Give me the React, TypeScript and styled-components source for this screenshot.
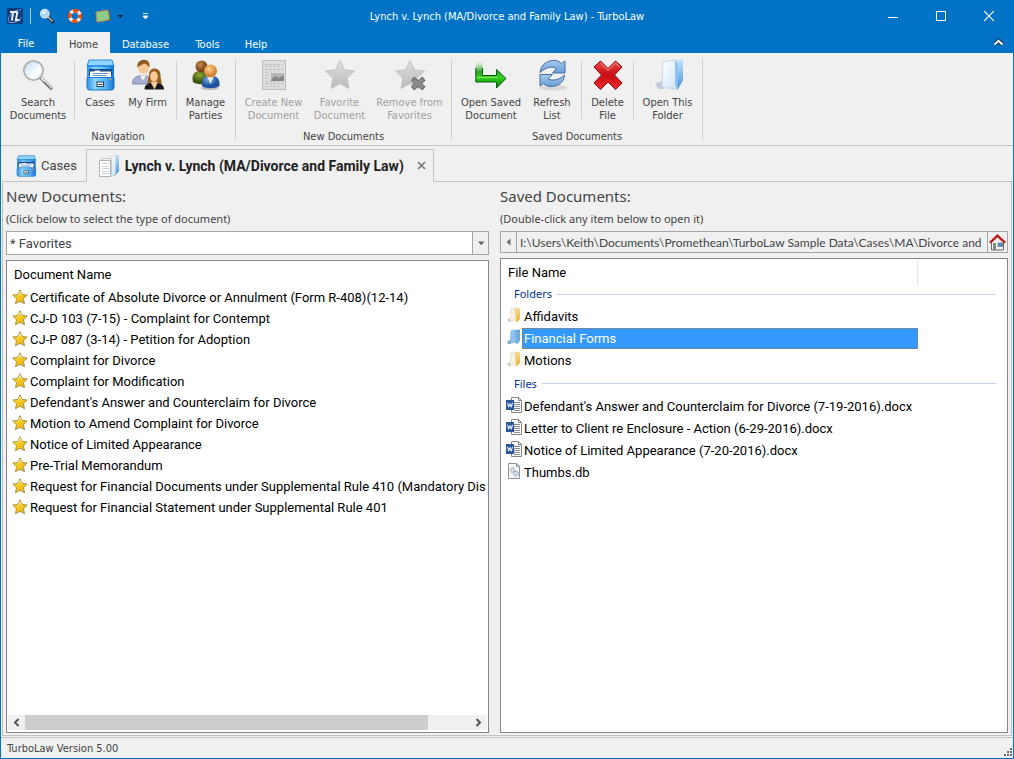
import React from "react";
import styled, { createGlobalStyle, css } from "styled-components";

const blue = "#0173c7";
const face = "#f0f0f0";
const line = "#c3c3c3";
const chromeFont = `"DejaVu Sans Condensed", "Noto Sans", sans-serif`;
const headingFont = `"Noto Sans", "Open Sans", sans-serif`;
const bodyFont = `Roboto, "Open Sans", sans-serif`;
const pathFont = `Lato, "Open Sans", sans-serif`;

const GlobalStyle = createGlobalStyle`
  *, *::before, *::after { box-sizing: border-box; }
  body { margin: 0; background: ${face}; font-family: ${bodyFont}; }
  button, input, select { font-family: inherit; }
`;

const bare = css`
  border: 0;
  margin: 0;
  padding: 0;
  background: transparent;
  color: inherit;
`;

const Window = styled.div`
  display: flex;
  flex-direction: column;
  min-height: 100vh;
  border: 1px solid ${blue};
  border-top: 0;
  background: ${face};
  color: #444;
`;

/* Title bar */
const TitleBar = styled.header`
  display: grid;
  grid-template-columns: 1fr auto 1fr;
  align-items: center;
  height: 32px;
  background: ${blue};
  color: #fff;
  font-family: ${chromeFont};
`;
const QuickAccess = styled.div`
  display: flex;
  align-items: center;
  padding-left: 6px;
`;
const QuickButton = styled.button<{ $w: number }>`
  ${bare}
  display: flex;
  align-items: center;
  justify-content: center;
  width: ${(p) => p.$w}px;
  height: 24px;
`;
const QuickDivider = styled.span`
  width: 1px;
  height: 16px;
  margin: 0 2px 0 7px;
  background: #b9cfe0;
`;
const Title = styled.h1`
  margin: 0;
  padding-top: 2px;
  font-size: 11px;
  font-weight: 400;
  line-height: 16px;
`;
const WindowButtons = styled.div`
  display: flex;
  justify-content: flex-end;
`;
const WindowButton = styled.button`
  ${bare}
  display: flex;
  align-items: center;
  justify-content: center;
  width: 48px;
  height: 32px;
`;

/* Ribbon tabs */
const MenuBar = styled.nav`
  display: flex;
  height: 21px;
  background: ${blue};
  font-family: ${chromeFont};
`;
const MenuTab = styled.button<{ $w: number; $active?: boolean }>`
  ${bare}
  width: ${(p) => p.$w}px;
  padding-top: 4px;
  font-size: 11px;
  line-height: 17px;
  color: ${(p) => (p.$active ? "#444" : "#fff")};
  background: ${(p) => (p.$active ? face : "transparent")};
`;
const FileTab = styled(MenuTab)`
  padding: 2px 6px 0 0;
`;
const CollapseButton = styled.button`
  ${bare}
  display: flex;
  align-items: center;
  justify-content: center;
  width: 30px;
  margin-left: auto;
`;

/* Ribbon */
const Ribbon = styled.div`
  display: flex;
  padding: 6px 0 5px;
  border-bottom: 1px solid ${line};
  font-family: ${chromeFont};
`;
const RibbonGroup = styled.section`
  display: flex;
  flex-direction: column;
  height: 81px;
  padding: 0 4px;
  border-right: 1px solid #cfcfcf;
`;
const RibbonItems = styled.div`
  display: flex;
  flex: 1;
`;
const RibbonLabel = styled.h2`
  margin: 0;
  font-size: 11px;
  font-weight: 400;
  line-height: 7px;
  text-align: center;
`;
const RibbonButton = styled.button<{ $w: number }>`
  ${bare}
  display: flex;
  flex-direction: column;
  align-items: center;
  width: ${(p) => p.$w}px;
  height: 64px;
  font-size: 11px;
  line-height: 13px;
  white-space: pre;
  &:disabled {
    color: #a0a0a0;
  }
  svg {
    flex: none;
    margin-bottom: 5px;
  }
`;
const RibbonDivider = styled.span`
  width: 1px;
  height: 58px;
  margin: 2px 3px;
  background: #cfcfcf;
`;

/* Document tabs */
const TabStrip = styled.nav`
  display: flex;
  height: 36px;
  padding-top: 3px;
  margin: 0 1px;
`;
const DocTab = styled.div<{ $active?: boolean }>`
  display: flex;
  align-items: center;
  padding: ${(p) => (p.$active ? "0 4px 0 11px" : "0 9px 0 12px")};
  border: 1px solid ${(p) => (p.$active ? line : "transparent")};
  border-bottom-color: ${(p) => (p.$active ? "transparent" : line)};
  ${(p) => !p.$active && "border-right: 0;"}
`;
const DocTabLabel = styled.button<{ $active?: boolean }>`
  ${bare}
  display: flex;
  align-items: center;
  gap: 4px;
  font-size: ${(p) => (p.$active ? 14 : 13)}px;
  line-height: 18px;
  ${(p) => p.$active && "font-weight: 700; color: #222;"}
`;
const CloseButton = styled.button`
  ${bare}
  display: flex;
  padding: 3px;
  margin-left: 10px;
`;
const TabRest = styled.div`
  flex: 1;
  border-bottom: 1px solid ${line};
`;

/* Work area */
const Workspace = styled.main`
  display: grid;
  grid-template-columns: minmax(0, 483fr) minmax(0, 508fr);
  gap: 11px;
  flex: 1;
  margin: 0 1px;
  padding: 4px 3px 2px;
  border: 1px solid ${line};
  border-top: 0;
`;
const Pane = styled.section`
  display: flex;
  flex-direction: column;
`;
const PaneTitle = styled.h2`
  margin: 0;
  font-family: ${headingFont};
  font-size: 15px;
  font-weight: 400;
  line-height: 20px;
`;
const PaneHint = styled.p`
  margin: 5px 0;
  font-family: ${headingFont};
  font-size: 11px;
  line-height: 15px;
`;
const Combo = styled.div`
  display: grid;
  grid-template-columns: minmax(0, 1fr) 16px;
  height: 24px;
  border: 1px solid #a6a6a6;
  background: #fff;
`;
const ComboSelect = styled.select`
  ${bare}
  grid-area: 1 / 1 / 2 / 3;
  appearance: none;
  padding-left: 3px;
  font-size: 13px;
  outline: none;
`;
const ComboArrow = styled.span`
  grid-area: 1 / 2 / 2 / 3;
  display: flex;
  align-items: center;
  justify-content: center;
  border-left: 1px solid #a6a6a6;
  background: ${face};
  pointer-events: none;
`;
const PathBar = styled.div`
  display: flex;
  height: 22px;
  border: 1px solid #a6a6a6;
`;
const PathButton = styled.button<{ $w: number }>`
  ${bare}
  display: flex;
  align-items: center;
  justify-content: center;
  flex: none;
  width: ${(p) => p.$w}px;
`;
const PathInput = styled.input`
  ${bare}
  flex: 1;
  min-width: 0;
  padding: 0 1px 0 3px;
  border: solid #a6a6a6;
  border-width: 0 1px;
  font-family: ${pathFont};
  font-size: 12px;
  color: #444;
  outline: none;
`;
const ListBox = styled.div`
  display: flex;
  flex-direction: column;
  flex: 1;
  margin-top: 5px;
  border: 1px solid #828790;
  background: #fff;
  color: #000;
  overflow: hidden;
`;
const ListTable = styled.table<{ $row: number }>`
  width: 100%;
  table-layout: fixed;
  border-collapse: collapse;
  font-size: 13px;
  line-height: 18px;
  th {
    font-weight: 400;
    text-align: left;
  }
  td {
    height: ${(p) => p.$row}px;
    padding: 0;
    white-space: nowrap;
    overflow: hidden;
  }
`;
const HeadCell = styled.th<{ $edge?: boolean }>`
  height: ${(p) => (p.$edge ? 26 : 25)}px;
  padding: ${(p) => (p.$edge ? "1px 7px 0" : "2px 7px 0")};
`;
const HeadText = styled.div<{ $edge?: boolean }>`
  line-height: 24px;
  ${(p) => p.$edge && "margin-right: -7px; border-right: 1px solid #e5e5e5;"}
`;
const NarrowCol = styled.col`
  width: 89px;
`;
const GroupCell = styled.th<{ $h: number }>`
  height: ${(p) => p.$h}px;
  padding: 1px 11px 0 13px;
  vertical-align: ${(p) => (p.$h > 20 ? "middle" : "top")};
`;
const GroupHeading = styled.div`
  display: flex;
  align-items: center;
  gap: 5px;
  font-family: ${headingFont};
  font-size: 11px;
  line-height: 16px;
  color: #003399;
  &::after {
    content: "";
    flex: 1;
    height: 1px;
    background: #c9d3ea;
  }
`;
const Entry = styled.div`
  display: flex;
  align-items: center;
  height: 21px;
  padding-left: 5px;
  svg {
    flex: none;
    margin-bottom: 2px;
  }
`;
const EntryName = styled.span<{ $selected?: boolean }>`
  flex: 1;
  height: 21px;
  padding-left: 1px;
  border: 1px solid transparent;
  line-height: 19px;
  ${(p) => p.$selected && "background: #3399ff; color: #fff; border: 1px dotted #a8794d;"}
`;
const ScrollBar = styled.div`
  display: flex;
  height: 15px;
  margin: auto 1px 2px;
  background: #f0f0f0;
`;
const ScrollButton = styled.button`
  ${bare}
  display: flex;
  align-items: center;
  justify-content: center;
  width: 17px;
`;
const ScrollTrack = styled.div`
  flex: 1;
  padding-right: 42px;
`;
const ScrollThumb = styled.div`
  height: 100%;
  background: #cdcdcd;
`;
const StatusBar = styled.footer`
  display: flex;
  align-items: center;
  justify-content: space-between;
  height: 21px;
  margin-top: 1px;
  padding: 2px 0 0 6px;
  border-top: 1px solid ${line};
  font-family: ${chromeFont};
  font-size: 11px;
  line-height: 16px;
  svg {
    align-self: flex-end;
    margin: 0 1px 2px 0;
  }
`;

/* Icons */
const HiddenSvg = styled.svg`
  position: absolute;
`;
const Gradients = () => (
  <HiddenSvg width="0" height="0" aria-hidden="true">
    <defs>
      <linearGradient id="cab" x1="0" x2="1">
        <stop offset="0" stopColor="#2f92e6" />
        <stop offset=".3" stopColor="#8fd6fb" />
        <stop offset=".7" stopColor="#52b4f3" />
        <stop offset="1" stopColor="#1670cf" />
      </linearGradient>
      <linearGradient id="gold" x1="0" x2="1" y1="0" y2="1">
        <stop offset="0" stopColor="#ffe238" />
        <stop offset="1" stopColor="#eaa900" />
      </linearGradient>
      <linearGradient id="gray" x1="0" x2="0" y1="0" y2="1">
        <stop offset="0" stopColor="#e0e0e0" />
        <stop offset="1" stopColor="#bababa" />
      </linearGradient>
      <linearGradient id="green" x1="0" x2="0" y1="0" y2="1">
        <stop offset="0" stopColor="#8fe06a" stopOpacity="0" />
        <stop offset=".4" stopColor="#2f9c2c" />
        <stop offset=".6" stopColor="#35d61c" />
        <stop offset="1" stopColor="#067a06" />
      </linearGradient>
      <linearGradient id="red" x1="0" x2="0" y1="0" y2="1">
        <stop offset="0" stopColor="#f04a4a" />
        <stop offset=".5" stopColor="#c80d12" />
        <stop offset="1" stopColor="#ee2a2f" />
      </linearGradient>
      <linearGradient id="glass" x1="0" x2="1" y1="0" y2="1">
        <stop offset="0" stopColor="#b9daf7" />
        <stop offset=".6" stopColor="#f8fcff" />
        <stop offset="1" stopColor="#dbeefd" />
      </linearGradient>
      <linearGradient id="paper" x1="0" x2="1" y1="0" y2="1">
        <stop offset="0" stopColor="#ffffff" />
        <stop offset="1" stopColor="#cfe3f5" />
      </linearGradient>
      <linearGradient id="bluefold" x1="0" x2="0" y1="0" y2="1">
        <stop offset="0" stopColor="#c6e4fa" />
        <stop offset="1" stopColor="#3f8fdd" />
      </linearGradient>
      <linearGradient id="goldfold" x1="0" x2="0" y1="0" y2="1">
        <stop offset="0" stopColor="#fbe3a0" />
        <stop offset="1" stopColor="#eda514" />
      </linearGradient>
      <linearGradient id="sync" x1="0" x2="0" y1="0" y2="1">
        <stop offset="0" stopColor="#a8cbee" />
        <stop offset="1" stopColor="#6a9dd6" />
      </linearGradient>
      <radialGradient id="skin" cx=".4" cy=".35">
        <stop offset="0" stopColor="#ffd596" />
        <stop offset="1" stopColor="#d3862e" />
      </radialGradient>
      <radialGradient id="tan" cx=".4" cy=".35">
        <stop offset="0" stopColor="#c98a4c" />
        <stop offset="1" stopColor="#7a4516" />
      </radialGradient>
      <radialGradient id="olive" cx=".4" cy=".3">
        <stop offset="0" stopColor="#8ea63c" />
        <stop offset="1" stopColor="#3f5510" />
      </radialGradient>
      <radialGradient id="navy" cx=".4" cy=".3">
        <stop offset="0" stopColor="#7fb2ea" />
        <stop offset="1" stopColor="#1f519f" />
      </radialGradient>
    </defs>
  </HiddenSvg>
);

const Logo = () => (
  <svg width="16" height="16" viewBox="0 0 16 16">
    <rect width="16" height="16" rx="1" fill="#123c80" />
    <path d="M1.500 13.500C0 8 7 1.500 14 1.800" stroke="#6f98d4" strokeWidth="1" fill="none" />
    <path d="M3 4h7M6.200 4 4.800 12.500M10.500 3.500 8.800 12H13" stroke="#eaf2fc" strokeWidth="1.900" fill="none" />
    <path d="M2 14.300c5 1 10-1 12.500-5" stroke="#8db0e2" strokeWidth="1" fill="none" />
  </svg>
);
const QuickSearchIcon = () => (
  <svg width="16" height="16" viewBox="0 0 16 16">
    <path d="m9 9 5 5" stroke="#222" strokeWidth="2.600" strokeLinecap="round" />
    <path d="m9 9 4.600 4.400" stroke="#d8d8d8" strokeWidth="1.200" />
    <circle cx="5.800" cy="5.700" r="4.200" fill="#a9d6f6" stroke="#d5e6f2" strokeWidth="1.300" />
    <circle cx="4.800" cy="4.600" r="1.700" fill="#e9f7ff" />
  </svg>
);
const LifebuoyIcon = () => (
  <svg width="16" height="16" viewBox="0 0 16 16">
    <circle cx="8" cy="8" r="5.200" fill="none" stroke="#f7f3ef" strokeWidth="3.800" />
    <circle cx="8" cy="8" r="5.200" fill="none" stroke="#e2501e" strokeWidth="3.800" strokeDasharray="5.200 2.968" strokeDashoffset="2.600" />
    <circle cx="8" cy="8" r="7.200" fill="none" stroke="#8e3a1c" strokeWidth=".5" />
  </svg>
);
const NoteIcon = () => (
  <svg width="16" height="14" viewBox="0 0 16 14">
    <path d="M1 3 13.500 1 15 11 2 13Z" fill="#8ecb86" stroke="#b08a52" strokeWidth="1" />
    <path d="m13.500 1 1.500 10-3 .5" fill="none" stroke="#7d5e38" strokeWidth="1" />
  </svg>
);
const CaretDown = () => (
  <svg width="8" height="5" viewBox="0 0 8 5">
    <path d="M1 .5h6.500L4.250 4.200Z" fill="#666" />
  </svg>
);
const TinyCaret = () => (
  <svg width="5" height="3" viewBox="0 0 5 3">
    <path d="M0 0h5L2.500 3Z" fill="#0a1a2c" />
  </svg>
);
const CustomizeIcon = () => (
  <svg width="7" height="7" viewBox="0 0 7 7">
    <path d="M1 .500h5M1 3h5L3.500 6Z" fill="#fff" stroke="#fff" strokeWidth=".8" />
  </svg>
);
const SearchIcon = () => (
  <svg width="32" height="32" viewBox="0 0 32 32">
    <path d="m18 18 11 11" stroke="#777" strokeWidth="3.600" strokeLinecap="round" />
    <path d="m18.500 18 10.500 10.500" stroke="#ededed" strokeWidth="2" strokeLinecap="round" />
    <path d="m22 22.800 6.500 6.200" stroke="#444" strokeWidth="1" />
    <circle cx="11.500" cy="11.500" r="9.500" fill="url(#glass)" stroke="#8b8b8b" strokeWidth="1.600" />
    <circle cx="11.500" cy="11.500" r="9.300" fill="none" stroke="#d9d9d9" strokeWidth=".7" />
  </svg>
);
const CabinetIcon = ({ size = 32 }: { size?: number }) => (
  <svg width={size} height={size} viewBox="0 0 32 32">
    <path d="M5 1h23l2 6H3Z" fill="#8fd4fa" stroke="#2f8bdb" />
    <path d="M3 6h27v13H3Z" fill="url(#cab)" />
    <path d="M3 7h27" stroke="#1f86e0" strokeWidth="1.500" />
    <rect x="5" y="10" width="23" height="7" fill="#174a86" />
    <path d="M6 12.500h4l1-1h5v1h11v6H6Z" fill="#fff" />
    <path d="M9 14.500h15M9 16.500h13" stroke="#5b95cc" />
    <path d="M3 18.500h27V29l-1.500 2h-24L3 29Z" fill="url(#cab)" stroke="#1b76cf" />
    <rect x="13" y="23" width="6.500" height="4.500" fill="#fff" stroke="#23405f" />
    <path d="M14.500 25.500h4" stroke="#333" />
    <path d="M25.500 20.500h2" stroke="#ff9a2e" strokeWidth="1.500" />
  </svg>
);
const FirmIcon = () => (
  <svg width="32" height="32" viewBox="0 0 32 32">
    <path d="M.5 25c-.5-5 3-8.500 10.500-8.500 5 0 8 2 8.500 8.500Z" fill="#a9afd0" stroke="#757ca5" strokeWidth=".8" />
    <path d="m8 16.500 3 5 3-5Z" fill="#fff" />
    <circle cx="11.500" cy="9" r="5.500" fill="#f5c795" />
    <path d="M5.500 9c-1-5 2-8 6-8.300C16 .5 18.500 4 17.300 9c-1-2.500-3-4-5-4.500C10 6 7 6 5.500 9Z" fill="#8e5a20" />
    <path d="M17 27c-3-4 0-8 0-11 0-5 3-6.500 5.500-6.500 4 0 6 3 6 7 0 4 2 6 .5 10Z" fill="#9a5e1c" />
    <ellipse cx="22" cy="17.500" rx="3.800" ry="5.200" fill="#f7cb98" />
    <path d="M12.500 30.500c0-5 4-7 9.500-7s10 2 10 7Z" fill="#16181d" />
    <path d="m18.500 23 4 7.500 3.500-7.500Z" fill="#f7cb98" />
  </svg>
);
const PartiesIcon = () => (
  <svg width="32" height="32" viewBox="0 0 32 32">
    <ellipse cx="20" cy="29" rx="9" ry="2" fill="#bcbcbc" />
    <path d="M3 23c-2-8 2-11 8-11s9 3 9 11c-5 3-13 3-17 0Z" fill="url(#olive)" />
    <circle cx="11.500" cy="7.500" r="6" fill="url(#tan)" />
    <path d="M12 27c-1-7 2-10.500 8.500-10.500S30 20 29.500 27c-5 3-13 3-17.500 0Z" fill="url(#navy)" />
    <path d="m17 17 3.500 8 3.500-8Z" fill="#e8f1fb" />
    <circle cx="20.500" cy="12" r="6.500" fill="url(#skin)" />
  </svg>
);
const NewDocIcon = () => (
  <svg width="32" height="32" viewBox="0 0 32 32">
    <rect x="4.500" y="1.500" width="23" height="29" fill="#dedede" stroke="#bdbdbd" />
    <path d="M7 5.500h18M7 7.500h15M7 10.500h18M7 13.500h4M7 16.500h4M7 19.500h4M7 22.500h17M7 24.500h18M7 27.500h14" stroke="#c2c2c2" strokeDasharray="3 1" />
    <rect x="13" y="14" width="13" height="8" fill="#b5b5b5" />
    <path d="m13 21 4-4 4 2 5-3v6H13Z" fill="#858585" />
  </svg>
);
const starPath =
  "M16 1.500 20.300 10.800 30.500 12 23 19.200 25 29.500 16 24.500 7 29.500 9 19.200 1.500 12 11.700 10.800Z";
const GrayStar = ({ crossed }: { crossed?: boolean }) => (
  <svg width="32" height="32" viewBox="0 0 32 32">
    <path d={starPath} fill="url(#gray)" stroke="#c2c2c2" strokeLinejoin="round" />
    {crossed && (
      <g>
        <path d="m18.500 19.500 11.500 10M30 19.500l-11.500 10" stroke="#6f6f6f" strokeWidth="5" />
        <path d="m19.500 20.500 9.500 8M29 20.500l-9.500 8" stroke="#8d8d8d" strokeWidth="3" />
      </g>
    )}
  </svg>
);
const OpenArrowIcon = () => (
  <svg width="32" height="32" viewBox="0 0 32 32">
    <path d="M.8 2h6.700v14.500h14V10.500L31 19.500l-9.500 9.500v-6H.8Z" fill="url(#green)" />
    <path d="M.8 9v14h20.700v6L31 19.500l-9.500-9v6h-14V9" fill="none" stroke="#0b5a12" />
    <path d="M2.500 18.500h20" stroke="#8be564" strokeWidth="1" />
  </svg>
);
const RefreshIcon = () => (
  <svg width="32" height="32" viewBox="0 0 32 32">
    <ellipse cx="17" cy="28.500" rx="14" ry="3" fill="#d8d8d8" />
    <g fill="url(#sync)" stroke="#456fa6" strokeLinejoin="round">
      <path d="M4 13.500C5 5 12 1 19 1.500c3 .3 5 1.500 6.500 3L29 2v12H16.500l4-4.500C15 6.500 9 9 4 13.500Z" />
      <path d="M28.500 16C28 24 21 28 14 27.500c-3-.3-5-1.500-6.500-3L4 27V15.500h12.500L12 20c5 2.500 11.500.5 16.500-4Z" />
    </g>
  </svg>
);
const DeleteIcon = () => (
  <svg width="32" height="32" viewBox="0 0 32 32">
    <path
      d="M8.500 2 16 9.500 23.500 2 30 8l-7.500 8 7.500 8-6.500 6.500L16 23l-7.500 7.500L2 24l7.500-8L2 8Z"
      fill="url(#red)"
      stroke="#8d0508"
      strokeLinejoin="round"
    />
    <path d="M8.500 4 16 11.500 23.500 4 28 8.500" fill="none" stroke="#ff9b9b" />
  </svg>
);
const OpenFolderIcon = () => (
  <svg width="32" height="32" viewBox="0 0 32 32">
    <path d="m3 24 9-2v8H6Z" fill="#c3ccdc" />
    <path d="M17 1 31 .5v21l-6 10V8Z" fill="url(#bluefold)" />
    <path d="m11 3 12-2 2 29-15-1.500Z" fill="url(#paper)" stroke="#b4cde4" strokeWidth=".7" />
    <path d="m23 2 3 3-.5 24.500L23 27Z" fill="#8fc3f0" />
  </svg>
);
const CaseTabIcon = () => (
  <svg width="23" height="24" viewBox="0 0 23 24">
    <path d="m12 3 9-2.500v17L16 22Z" fill="url(#bluefold)" />
    <path d="M10 3 18 1l-.5 19-5 2.500Z" fill="url(#paper)" stroke="#bfd0e0" strokeWidth=".6" />
    <rect x="3.500" y="4.500" width="10" height="15" fill="#f5f5f5" stroke="#c8c8c8" />
    <rect x="1.500" y="6.500" width="11" height="16" fill="#fff" stroke="#b4b4b4" />
    <path d="M4 9.500h7M4 12.500h7M4 14.500h7M4 17.500h7M4 19.500h7" stroke="#cdd2d9" />
  </svg>
);
const CloseIcon = () => (
  <svg width="9" height="9" viewBox="0 0 9 9">
    <path d="m1 1 7 7M8 1 1 8" stroke="#777" strokeWidth="1.600" />
  </svg>
);
const GoldStar = () => (
  <svg width="16" height="16" viewBox="0 0 32 32">
    <path d={starPath} fill="url(#gold)" stroke="#a08c4c" strokeWidth="1.800" strokeLinejoin="round" />
    <path d="M12 14 16 5l4 8" fill="none" stroke="#fff3a0" strokeWidth="1.500" />
  </svg>
);
const FolderIcon = ({ selected }: { selected?: boolean }) => (
  <svg width="16" height="16" viewBox="0 0 16 16">
    <path d="m1 12.500 4-2v4.500H2.500Z" fill={selected ? "#8aa5c0" : "#cfccc2"} />
    <path d="M7 1 14 .5v11L11 15.500Z" fill={selected ? "#6aa9dc" : "url(#goldfold)"} />
    <path d="M5 1.500 9.500 1l.5 12.500-6 .5Z" fill={selected ? "#8fc2ec" : "#f6f1e2"} stroke={selected ? "#7fb2dc" : "#ddd6c2"} strokeWidth=".6" />
    <path d="M9.500 1 11.500 3l-.5 12.500-1.500-2Z" fill={selected ? "#79b0e0" : "#f3cf6c"} />
  </svg>
);
const WordIcon = () => (
  <svg width="16" height="16" viewBox="0 0 16 16">
    <path d="M5.500.5h7l3 3v12h-10Z" fill="#fff" stroke="#858585" />
    <path d="M12.500.5v3h3" fill="none" stroke="#858585" />
    <path d="M8 5.500h6M8 7.500h6M8 9.500h6M8 11.500h6M8 13.500h6" stroke="#8c8c8c" />
    <rect y="3" width="8" height="10" fill="#2b579a" />
    <path d="m1.500 5.800 1.200 4.400L4 6.500l1.300 3.700 1.200-4.400" stroke="#fff" fill="none" />
  </svg>
);
const DbIcon = () => (
  <svg width="16" height="16" viewBox="0 0 16 16">
    <path d="M2.500.5h8l3 3v12h-11Z" fill="#f8f8f8" stroke="#929292" />
    <path d="M10.500.5v3h3" fill="none" stroke="#929292" />
    <circle cx="6.500" cy="7" r="2.200" fill="#dde3e8" stroke="#89939c" strokeDasharray="1.200 .5" />
    <circle cx="9.800" cy="10.500" r="2.500" fill="#cfe0ee" stroke="#7d8f9f" strokeDasharray="1.200 .5" />
  </svg>
);
const HomeIcon = () => (
  <svg width="17" height="17" viewBox="0 0 17 17">
    <path d="M2.500 8.500 8.500 3l6 5.500v7.500h-12Z" fill="#f2f2ee" stroke="#666" />
    <path d="M.8 8.800 8.500 1.500l7.700 7.300" fill="none" stroke="#c5161c" strokeWidth="2.200" />
    <rect x="4" y="9" width="3" height="7" fill="#7f8a7f" />
    <rect x="9" y="9" width="4.500" height="3.500" fill="#4f86d0" stroke="#777" strokeWidth=".7" />
  </svg>
);
const Chevron = ({ left }: { left?: boolean }) => (
  <svg width="7" height="9" viewBox="0 0 7 9">
    <path d={left ? "M5.500 1 2 4.500 5.500 8" : "M1.500 1 5 4.500 1.500 8"} fill="none" stroke="#505050" strokeWidth="1.900" />
  </svg>
);

const documents = [
  "Certificate of Absolute Divorce or Annulment (Form R-408)(12-14)",
  "CJ-D 103 (7-15) - Complaint for Contempt",
  "CJ-P 087 (3-14) - Petition for Adoption",
  "Complaint for Divorce",
  "Complaint for Modification",
  "Defendant's Answer and Counterclaim for Divorce",
  "Motion to Amend Complaint for Divorce",
  "Notice of Limited Appearance",
  "Pre-Trial Memorandum",
  "Request for Financial Documents under Supplemental Rule 410 (Mandatory Dis",
  "Request for Financial Statement under Supplemental Rule 401",
];
const folders = ["Affidavits", "Financial Forms", "Motions"];
const selectedFolder = "Financial Forms";
const files = [
  "Defendant's Answer and Counterclaim for Divorce (7-19-2016).docx",
  "Letter to Client re Enclosure - Action (6-29-2016).docx",
  "Notice of Limited Appearance (7-20-2016).docx",
  "Thumbs.db",
];
const casePath =
  "I:\\Users\\Keith\\Documents\\Promethean\\TurboLaw Sample Data\\Cases\\MA\\Divorce and";

export default function App() {
  return (
    <Window>
      <GlobalStyle />
      <Gradients />
      <TitleBar>
        <QuickAccess>
          <Logo />
          <QuickDivider />
          <QuickButton $w={28} aria-label="Search"><QuickSearchIcon /></QuickButton>
          <QuickButton $w={28} aria-label="Help"><LifebuoyIcon /></QuickButton>
          <QuickButton $w={28} aria-label="Notes"><NoteIcon /></QuickButton>
          <QuickButton $w={6} aria-label="Note options"><TinyCaret /></QuickButton>
          <QuickButton $w={44} aria-label="Customize toolbar"><CustomizeIcon /></QuickButton>
        </QuickAccess>
        <Title>Lynch v. Lynch (MA/Divorce and Family Law) - TurboLaw</Title>
        <WindowButtons>
          <WindowButton aria-label="Minimize">
            <svg width="10" height="10"><path d="M0 6.500h10" stroke="#fff" /></svg>
          </WindowButton>
          <WindowButton aria-label="Maximize">
            <svg width="10" height="10"><rect x=".5" y=".5" width="9" height="9" fill="none" stroke="#fff" /></svg>
          </WindowButton>
          <WindowButton aria-label="Close">
            <svg width="10" height="10"><path d="m0 0 10 10M10 0 0 10" stroke="#fff" strokeWidth="1.200" /></svg>
          </WindowButton>
        </WindowButtons>
      </TitleBar>

      <MenuBar>
        <FileTab $w={56}>File</FileTab>
        <MenuTab $w={53} $active>Home</MenuTab>
        <MenuTab $w={71}>Database</MenuTab>
        <MenuTab $w={53}>Tools</MenuTab>
        <MenuTab $w={44}>Help</MenuTab>
        <CollapseButton aria-label="Collapse ribbon">
          <svg width="11" height="9" viewBox="0 0 11 9">
            <path d="M1.500 6.500 5.500 2.800l4 3.700" fill="none" stroke="#14395c" strokeWidth="4" />
            <path d="M1.500 6.500 5.500 2.800l4 3.700" fill="none" stroke="#fff" strokeWidth="2" />
          </svg>
        </CollapseButton>
      </MenuBar>

      <Ribbon>
        <RibbonGroup>
          <RibbonItems>
            <RibbonButton $w={66}><SearchIcon />{"Search\nDocuments"}</RibbonButton>
            <RibbonDivider />
            <RibbonButton $w={44}><CabinetIcon />Cases</RibbonButton>
            <RibbonButton $w={51}><FirmIcon />My Firm</RibbonButton>
            <RibbonDivider />
            <RibbonButton $w={51}><PartiesIcon />{"Manage\nParties"}</RibbonButton>
          </RibbonItems>
          <RibbonLabel>Navigation</RibbonLabel>
        </RibbonGroup>
        <RibbonGroup>
          <RibbonItems>
            <RibbonButton $w={67} disabled><NewDocIcon />{"Create New\nDocument"}</RibbonButton>
            <RibbonButton $w={65} disabled><GrayStar />{"Favorite\nDocument"}</RibbonButton>
            <RibbonButton $w={75} disabled><GrayStar crossed />{"Remove from\nFavorites"}</RibbonButton>
          </RibbonItems>
          <RibbonLabel>New Documents</RibbonLabel>
        </RibbonGroup>
        <RibbonGroup>
          <RibbonItems>
            <RibbonButton $w={70}><OpenArrowIcon />{"Open Saved\nDocument"}</RibbonButton>
            <RibbonButton $w={52}><RefreshIcon />{"Refresh\nList"}</RibbonButton>
            <RibbonDivider />
            <RibbonButton $w={45}><DeleteIcon />{"Delete\nFile"}</RibbonButton>
            <RibbonDivider />
            <RibbonButton $w={61}><OpenFolderIcon />{"Open This\nFolder"}</RibbonButton>
          </RibbonItems>
          <RibbonLabel>Saved Documents</RibbonLabel>
        </RibbonGroup>
      </Ribbon>

      <TabStrip>
        <DocTab>
          <DocTabLabel><CabinetIcon size={22} />Cases</DocTabLabel>
        </DocTab>
        <DocTab $active>
          <DocTabLabel $active><CaseTabIcon />Lynch v. Lynch (MA/Divorce and Family Law)</DocTabLabel>
          <CloseButton aria-label="Close tab"><CloseIcon /></CloseButton>
        </DocTab>
        <TabRest />
      </TabStrip>

      <Workspace>
        <Pane>
          <PaneTitle>New Documents:</PaneTitle>
          <PaneHint id="type-hint">(Click below to select the type of document)</PaneHint>
          <Combo>
            <ComboSelect aria-labelledby="type-hint" defaultValue="favorites">
              <option value="favorites">* Favorites</option>
            </ComboSelect>
            <ComboArrow><CaretDown /></ComboArrow>
          </Combo>
          <ListBox>
            <ListTable $row={21}>
              <thead>
                <tr><HeadCell><HeadText>Document Name</HeadText></HeadCell></tr>
              </thead>
              <tbody>
                {documents.map((name) => (
                  <tr key={name}>
                    <td><Entry><GoldStar /><EntryName>{name}</EntryName></Entry></td>
                  </tr>
                ))}
              </tbody>
            </ListTable>
            <ScrollBar>
              <ScrollButton aria-label="Scroll left"><Chevron left /></ScrollButton>
              <ScrollTrack><ScrollThumb /></ScrollTrack>
              <ScrollButton aria-label="Scroll right"><Chevron /></ScrollButton>
            </ScrollBar>
          </ListBox>
        </Pane>

        <Pane>
          <PaneTitle>Saved Documents:</PaneTitle>
          <PaneHint>(Double-click any item below to open it)</PaneHint>
          <PathBar>
            <PathButton $w={15} aria-label="Back">
              <svg width="5" height="8" viewBox="0 0 5 8"><path d="M4.500.500v7L.5 4Z" fill="#666" /></svg>
            </PathButton>
            <PathInput aria-label="Folder path" readOnly value={casePath} />
            <PathButton $w={19} aria-label="Home folder"><HomeIcon /></PathButton>
          </PathBar>
          <ListBox>
            <ListTable $row={22}>
              <colgroup><col /><NarrowCol /></colgroup>
              <thead>
                <tr>
                  <HeadCell $edge><HeadText $edge>File Name</HeadText></HeadCell>
                  <HeadCell $edge aria-label="Details" />
                </tr>
              </thead>
              <tbody>
                <tr><GroupCell $h={20} colSpan={2}><GroupHeading>Folders</GroupHeading></GroupCell></tr>
                {folders.map((name) => (
                  <tr key={name}>
                    <td>
                      <Entry>
                        <FolderIcon selected={name === selectedFolder} />
                        <EntryName $selected={name === selectedFolder}>{name}</EntryName>
                      </Entry>
                    </td>
                    <td />
                  </tr>
                ))}
                <tr><GroupCell $h={24} colSpan={2}><GroupHeading>Files</GroupHeading></GroupCell></tr>
                {files.map((name) => (
                  <tr key={name}>
                    <td>
                      <Entry>
                        {name.endsWith(".docx") ? <WordIcon /> : <DbIcon />}
                        <EntryName>{name}</EntryName>
                      </Entry>
                    </td>
                    <td />
                  </tr>
                ))}
              </tbody>
            </ListTable>
          </ListBox>
        </Pane>
      </Workspace>

      <StatusBar>
        TurboLaw Version 5.00
        <svg width="8" height="8" fill="#6d6d6d">
          <path d="M6 0h2v2H6zM3 3h2v2H3zM6 3h2v2H6zM0 6h2v2H0zM3 6h2v2H3zM6 6h2v2H6z" />
        </svg>
      </StatusBar>
    </Window>
  );
}
